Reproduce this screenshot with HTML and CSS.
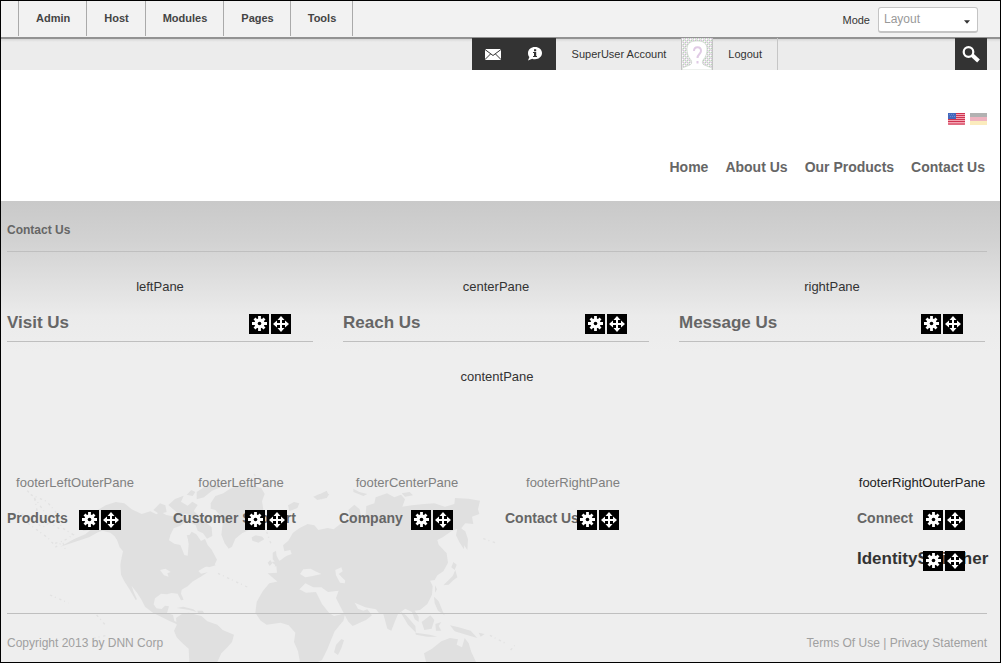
FILE: index.html
```
<!DOCTYPE html>
<html lang="en">
<head>
<meta charset="utf-8">
<title>Contact Us</title>
<link rel="stylesheet" href="styles.css">
</head>
<body>
<svg class="defs" aria-hidden="true">
  <symbol id="gear" viewBox="0 0 20 20">
    <g stroke="#fff" stroke-width="2.800"><path d="M10.500 2v15M3 9.500h15M5.500 4.500l10 10M15.500 4.500l-10 10"/></g>
    <circle cx="10.500" cy="9.500" r="5" fill="#fff"/><circle cx="10.500" cy="9.500" r="1.800" fill="#000"/>
  </symbol>
  <symbol id="move" viewBox="0 0 20 20">
    <path d="M10 4v12M4 10h12" stroke="#fff" stroke-width="2"/>
    <path d="M10 2l3.500 4h-7zM10 18l3.500-4h-7zM2 10l4-3.500v7zM18 10l-4-3.500v7z" fill="#fff"/>
  </symbol>
</svg>

<div class="control-bar">
  <nav class="control-menu">
    <a href="#">Admin</a><a href="#">Host</a><a href="#">Modules</a><a href="#">Pages</a><a href="#">Tools</a>
  </nav>
  <div class="mode">
    <label for="mode">Mode</label>
    <div class="mode-box">
      <select id="mode"><option>Layout</option></select>
      <svg class="caret" viewBox="0 0 7 4" aria-hidden="true"><path d="M0 0h7L3.500 4z" fill="#333"/></svg>
    </div>
  </div>
</div>

<div class="user-bar">
  <div class="user-group">
    <button class="dark" aria-label="Messages"><svg width="16" height="11" viewBox="0 0 16 11"><rect width="16" height="11" rx="1" fill="#fff"/><path d="M0 .5l8 6 8-6M0 10.500l5.500-5.500M16 10.500L10.500 5" fill="none" stroke="#333"/></svg></button>
    <button class="dark" aria-label="Notifications"><svg width="16" height="14" viewBox="0 0 16 14"><path d="M8 0c4 0 7 2.600 7 6s-3 6.200-7 6.200c-1 0-2-.1-2.800-.5L1 13.500l1.400-3.400C1.400 9 1 7.600 1 6c0-3.400 3-6 7-6z" fill="#fff"/><path d="M7 2.300h2.200v1.900H7zM6 5h3.200v4H10v1H6V9h1V6H6z" fill="#333"/></svg></button>
    <a class="account" href="#">SuperUser Account</a>
    <svg class="avatar" viewBox="0 0 32 32" role="img" aria-label="Avatar">
      <defs><pattern id="speckle" width="4" height="4" patternUnits="userSpaceOnUse"><rect width="4" height="4" fill="#e4e4e4"/><path d="M0 0h1v1H0zM2 2h1v1H2z" fill="#b5d5b5"/><path d="M2 0h1v1H2zM0 2h1v1H0z" fill="#d6bfdc"/><path d="M1 1h1v1H1zM3 3h1v1H3z" fill="#fff"/></pattern></defs>
      <rect width="32" height="32" fill="url(#speckle)"/>
      <path d="M1 32v-2l8-3c2-1 2-3 1-5-3-3-4-7-4-11 0-6 4-8 10-8s10 2 10 8c0 4-1 8-4 11-1 2-1 4 1 5l8 3v2z" fill="#fff" stroke="#c2cfc2" stroke-width=".6"/>
      <path d="M13 13c0-5 7-5 7 0 0 3-3.500 3-3.500 7M16.500 23v2.500" fill="none" stroke="#e0cbe5" stroke-width="2"/>
      <path d="M.5 0v32M31.500 0v32" stroke="#c4c4c4"/>
    </svg>
    <a class="logout" href="#">Logout</a>
  </div>
  <button class="dark search" aria-label="Search"><svg width="18" height="17" viewBox="0 0 18 17"><circle cx="6.500" cy="6" r="4.800" fill="none" stroke="#fff" stroke-width="2.200"/><path d="M10 9l6.500 6" stroke="#fff" stroke-width="4"/></svg></button>
</div>

<header class="site-header">
  <div class="languages">
    <a href="#" aria-label="English"><svg width="17" height="12" viewBox="0 0 17 12"><rect width="17" height="12" rx="1" fill="#f3a5b3"/><path d="M0 .5h17M0 2.500h17M0 4.500h17M0 6.500h17M0 8.500h17M0 11h17" stroke="#cf3350"/><path d="M0 0h8v6H0z" fill="#4468bd"/><path d="M1 1.500h6M2 3.500h5" stroke="#6d8bd0" stroke-dasharray="1 1"/></svg></a>
    <a href="#" aria-label="German"><svg width="17" height="12" viewBox="0 0 17 12"><path d="M0 0h17v4H0z" fill="#b2b2b2"/><path d="M0 4h17v4H0z" fill="#efb3c0"/><path d="M0 8h17v4H0z" fill="#fbecbd"/></svg></a>
  </div>
  <nav class="main-nav"><a href="#">Home</a><a href="#">About Us</a><a href="#">Our Products</a><a href="#">Contact Us</a></nav>
</header>

<main class="content">
  <h1 class="breadcrumb">Contact Us</h1>
  <div class="panes">
    <section class="pane"><p class="pane-name">leftPane</p><div class="module"><h2>Visit Us</h2><div class="actions"><button aria-label="Settings"><svg><use href="#gear"/></svg></button><button aria-label="Move"><svg><use href="#move"/></svg></button></div></div></section>
    <section class="pane"><p class="pane-name">centerPane</p><div class="module"><h2>Reach Us</h2><div class="actions"><button aria-label="Settings"><svg><use href="#gear"/></svg></button><button aria-label="Move"><svg><use href="#move"/></svg></button></div></div></section>
    <section class="pane"><p class="pane-name">rightPane</p><div class="module"><h2>Message Us</h2><div class="actions"><button aria-label="Settings"><svg><use href="#gear"/></svg></button><button aria-label="Move"><svg><use href="#move"/></svg></button></div></div></section>
  </div>
  <p class="pane-name content-pane">contentPane</p>
</main>

<footer class="site-footer">
  <svg class="world" viewBox="3 0 1650 606" aria-hidden="true">
    <g fill="#e0e0e0">
      <path d="M272 158l25-10 20-12 30-10 26 4 22 18 30 14 26-8 18 9 12-8 18 10 20 4 30-8 14 18-22 18-20 8-10 20-4 16 16 10 18 4 12 30 10 2 3-34-3-20 12-18 14 8 14 20 12-6 8 18 12 14 16 30-8 16-28 6-20 12 8 8 20-4-22 14-24 14-14 14-18 10-2 12 8 18-8 2-10-20-18-2-14 4-18-2-18 14-4 18 8 12 16 2 10-10 12 2-6 20 18 6 4 18 16 6-10 3-22-10-24-12-24-12-24-18-10-20-14-22-16-20 6 18 10 22-4 2-16-28-18-28-10-20-2-30 4-22 4-18-10-12-8-22-8-12-12-10-24-6-16 6-24 14-50 16-36 12 40-22 36-16 14-12-22 2-8-16 14-12z"/>
      <path d="M632 130l14-22 24-8 20-14 34-12 30 2 30 8 10 18-8 22 4 24-12 20-4 22-22 18-26 12-20 16-10 24-10 6-12-16-10-26 4-32-8-26-14-16-14-4z"/>
      <path d="M460 150l20-20 16 6 4 20-22 6zM505 135l20-18 26-10-8 18 20 12 14-12 16 10-12 18 16 14-20 8-18-14-22 2zM560 104l14-14 12 6-8 12zM590 96l22-14 34-8 20 6-30 12-24 20-22 6zM575 180l22-6 20 12 18 16 2 26-16 8-12-16-16-8-6-16-14-8zM560 226l12-2 8 14-14 4zM615 308l22-2 10 10-20 6-14-6zM755 232l12-6 20 4 6 8-18 10-18-6zM803 308l8-8 6 10-8 8zM818 278l10-6 2 16 8 14 6 10-20 8 4-10-10-12z"/>
      <path d="M530 444l20-4 30 8 10 8-22-6zM592 452l16 0 4 7-18 1z"/>
      <path d="M528 474l18-12 20-4 38 10 18 16 30 10 16 16 34 14-6 22-14 16-18 18-14 30h-82l-2-44-20-18-16-16-8-20 8-16z"/>
      <path d="M808 370l36-8 14 4 2 14 22 12 16-4 20 10 30-2 18 36 22 28 14 8 34-8-6 22-26 32-10 24-12 30-16 32-16 8h-50l-6-34-12-28 4-28-20-22-24-8-42 6-18-12-16-24 4-32 18-32zM1008 555l16-18 8 4-8 24-10 20-12-8z"/>
      <path d="M803 340l28-2-2-20-14-12 24-4 20-14 16-6-4-12-18 4-4-18 16-14 14-24 20-14 24-12 20 4 12 14 28-6 18 4 20-16 18-4 12-14-6-24 18-16 16 14 4 20 14-4 2-26 24-8 4-18 34-12 22 12 20-8 12 14-8 22 28-4 38-4 30-2 32 10 28-8 2-18 40 2 35 6-6 26 4 14-22 8 4 22-24-2-12 14 10 14-2 50-12-18-12-24 4-20-18 8-26 18-16 8 4 14 24 26 4 28-14 26-18 12-8 14-14 2 8 16-2 26-14 28-22 18-16 2 12 18 0 16-12-8-8-22-20-10-22 16-10 24-10 26-12-6-12-44-14-4-8-10-32-6-32-14 10 18 16 6 12-4 14 18-18 14-40 18-14-14-24-46-12-24 8-22-32 4-20-14-24 0-24-12-20 20-12 8-16-2z"/>
      <path d="M1060 86l18 10 24 6-12 6-30-12zM1205 100l24-4 10 10-24 4zM1384 206l12 8 8 24-2 32-12-18zM1360 306l10 8-6 16-10-8zM1366 330l6 22-14 10-12 12-16 2 16-16 12-12zM1305 376l6 12-6 10zM1302 410l14 14 12 30 6 12-20-14-10-22zM1200 454l18 12 28 32 2 20-24-24zM1246 518l44 6 22 6-30 0-34-6zM1265 486l26-20 12 14-8 26-22 4zM1306 492l18-6-8 12 8 14-16 0zM1350 496l26 6 36 10 20 22-34-10-34-10zM1436 518l18 4-12 8z"/>
      <path d="M1272 580l24-14 28-22 26-10 24 4-4 16 16 8 8-28 12 16 8 26 14 30H1278z"/>
      <path d="M836 184l10-6 4 6zM864 136l18-10 16 4-6 14-24 10zM940 110l18-8 30 0-8 12-28 6zM960 102l20-10 6 14-20 12z"/>
    </g>
    <g fill="#eee"><path d="M900 342l10-14 22-2 14 8 18 8-26 6-22 4zM1006 330l18-8 4 12-12 8 20 20-2 8-14-2-12-22zM986 154l24-14 10 8-20 18-4 22-14-8zM480 330l16-4 16 10-10 4 4 10-14-4z"/></g>
    <g fill="none" stroke="#e2e2e2" stroke-width="4" stroke-dasharray="7 9 3 11"><path d="M82 92l28 30 22 32 16 34-20 14-34-24-40-22M92 104l48 20 34 40 10 38 36 22-28 18-32 10M104 116l10 50 64 40M84 190l60 44 20 22M166 262l22-16 8 22"/><path d="M654 340l90 42M150 405l56 24M290 465l26 30M280 535l44-10M1450 236l40 14M1470 526l50 26M1532 570l12-14M762 42l8 12M800 215l14 40"/></g>
  </svg>
  <div class="footer-panes">
    <section><p class="pane-name">footerLeftOuterPane</p><div class="module"><h2>Products</h2><div class="actions"><button aria-label="Settings"><svg><use href="#gear"/></svg></button><button aria-label="Move"><svg><use href="#move"/></svg></button></div></div></section>
    <section><p class="pane-name">footerLeftPane</p><div class="module"><h2>Customer Support</h2><div class="actions"><button aria-label="Settings"><svg><use href="#gear"/></svg></button><button aria-label="Move"><svg><use href="#move"/></svg></button></div></div></section>
    <section><p class="pane-name">footerCenterPane</p><div class="module"><h2>Company</h2><div class="actions"><button aria-label="Settings"><svg><use href="#gear"/></svg></button><button aria-label="Move"><svg><use href="#move"/></svg></button></div></div></section>
    <section><p class="pane-name">footerRightPane</p><div class="module"><h2>Contact Us</h2><div class="actions"><button aria-label="Settings"><svg><use href="#gear"/></svg></button><button aria-label="Move"><svg><use href="#move"/></svg></button></div></div></section>
    <section class="outer"><p class="pane-name">footerRightOuterPane</p><div class="module"><h2>Connect</h2><div class="actions"><button aria-label="Settings"><svg><use href="#gear"/></svg></button><button aria-label="Move"><svg><use href="#move"/></svg></button></div></div>
      <div class="module identity"><h2>IdentitySwitcher</h2><div class="actions"><button aria-label="Settings"><svg><use href="#gear"/></svg></button><button aria-label="Move"><svg><use href="#move"/></svg></button></div></div></section>
  </div>
  <div class="legal"><span>Copyright 2013 by DNN Corp</span><span><a href="#">Terms Of Use</a> | <a href="#">Privacy Statement</a></span></div>
</footer>
</body>
</html>
```
FILE: styles.css
```
* { box-sizing: border-box; }
body {
  margin: 0;
  min-height: 100vh;
  border: 1px solid #000;
  background: #eee;
  color: #333;
  font: 13px/18px "Liberation Sans", Arial, sans-serif;
}
a { color: inherit; text-decoration: none; }
h1, h2, p { margin: 0; }
button { padding: 0; border: 0; font: inherit; cursor: pointer; }
svg { display: block; }
.defs { position: absolute; width: 0; height: 0; }

.control-bar {
  display: flex;
  justify-content: space-between;
  background: #f2f2f2;
  border-bottom: 1px solid #939393;
  padding: 0 22px 1px 17px;
  font-size: 11px;
}
.control-menu { display: flex; font-weight: bold; color: #444; border-right: 1px solid #aaa; }
.control-menu a { padding: 0 16px 0 17px; line-height: 35px; border-left: 1px solid #aaa; }
.mode { display: flex; align-items: center; gap: 8px; padding-top: 2px; }
.mode-box { position: relative; }
.mode select {
  display: block;
  width: 100px;
  height: 26px;
  padding: 0 5px;
  appearance: none;
  border: 1px solid #c4c4c4;
  border-bottom-width: 2px;
  border-radius: 3px;
  background: #fff;
  color: #999;
  font: 12px "Liberation Sans", Arial, sans-serif;
}
.caret { position: absolute; right: 8px; top: 13px; width: 6px; height: 4px; pointer-events: none; }

.user-bar {
  display: flex;
  align-items: stretch;
  padding-right: 13px;
  background: linear-gradient(#939393 1px, #d8d8d8 1px, #ececec 4px, #ececec);
  font-size: 11px;
  height: 32px;
}
.user-group { display: flex; margin-left: auto; margin-right: 177px; border-right: 1px solid #c6c6c6; }
.dark { display: flex; align-items: center; justify-content: center; width: 42px; background: #333; color: #fff; }
.search { width: 32px; }
.account { padding: 0 15px 0 16px; line-height: 32px; }
.avatar { width: 32px; height: 32px; }
.logout { padding: 0 15px; line-height: 32px; }

.site-header { padding: 43px 13px 25px 6px; background: #fff; }
.languages { display: flex; justify-content: flex-end; gap: 5px; }
.main-nav {
  display: flex;
  justify-content: flex-end;
  gap: 17px;
  padding: 33px 2px 0 0;
  color: #666;
  font-weight: bold;
  font-size: 14px;
}

.content { padding: 20px 13px 0 6px; background: linear-gradient(#c9c9c9, #d2d2d2 40px, #ebebeb 115px, #eee 150px); }
.breadcrumb { padding-bottom: 12px; border-bottom: 1px solid #bfbfbf; color: #666; font-size: 12px; line-height: 18px; }
.panes { display: grid; grid-template-columns: repeat(3, 1fr); gap: 30px; padding: 26px 2px 0 0; }
.pane-name { text-align: center; }
.module { position: relative; margin-top: 16px; }
.module h2 { color: #666; font-size: 14px; line-height: 20px; white-space: nowrap; }
.pane .module { padding-bottom: 7px; border-bottom: 1px solid #bfbfbf; }
.pane .module h2 { font-size: 17px; line-height: 22px; }
.actions { position: absolute; top: 2px; right: 22px; display: flex; gap: 2px; }
.actions button { width: 20px; height: 20px; background: #000; }
.actions svg { width: 20px; height: 20px; }
.content-pane { padding: 26px 0 74px; }

.site-footer { position: relative; padding: 14px 13px 10px 6px; }
.world { position: absolute; left: 0; bottom: 0; width: 550px; height: 202px; }
.footer-panes {
  position: relative;
  display: flex;
  gap: 30px;
  padding-bottom: 44px;
  border-bottom: 1px solid #bfbfbf;
}
.footer-panes section { width: 136px; }
.footer-panes section .pane-name { color: #808080; }
.footer-panes .outer { width: 130px; margin-left: auto; }
.footer-panes .outer .pane-name { color: #222; }
.footer-panes .identity { margin-top: 21px; }
.footer-panes .identity h2 { color: #333; font-size: 17px; }
.legal { position: relative; display: flex; justify-content: space-between; padding-top: 20px; color: #a0a0a0; font-size: 12px; }
```
